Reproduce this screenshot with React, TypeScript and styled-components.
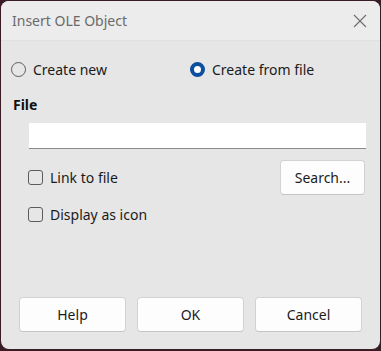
import React, { useState } from "react";
import styled, { createGlobalStyle } from "styled-components";

const GlobalStyle = createGlobalStyle`
  html, body {
    margin: 0;
    padding: 0;
    background: #3a1c24;
  }
  body {
    width: 381px;
    height: 351px;
    overflow: hidden;
    font-family: "Noto Sans", "Open Sans", sans-serif;
  }
`;

const Window = styled.div`
  margin: 1px 0 0 1px;
  width: 379px;
  height: 348px;
  background: #e6e6e6;
  border-radius: 8px;
  overflow: hidden;
  display: flex;
  flex-direction: column;
`;

const TitleBar = styled.div`
  height: 39px;
  flex: none;
  background: #ececec;
  border-bottom: 1px solid #e0e0e0;
  display: flex;
  align-items: center;
  justify-content: space-between;
  padding: 0 11px 0 11px;
`;

const Title = styled.span`
  font-size: 14px;
  color: #6a6a6a;
  margin-top: -1px;
`;

const CloseButton = styled.button`
  border: none;
  background: transparent;
  padding: 0;
  width: 18px;
  height: 18px;
  display: flex;
  align-items: center;
  justify-content: center;
`;

const Body = styled.div`
  flex: 1;
  display: flex;
  flex-direction: column;
  padding: 19px 14px 17px 10px;
`;

const RadioRow = styled.div`
  display: grid;
  grid-template-columns: 179px 1fr;
  height: 18px;
  align-items: center;
`;

const Option = styled.label`
  display: flex;
  align-items: center;
  gap: 7px;
  font-size: 14px;
  color: #1b1b1b;
  cursor: default;
`;

const RadioDot = styled.span<{ $on: boolean }>`
  width: 15px;
  height: 15px;
  box-sizing: border-box;
  border-radius: 50%;
  border: ${(p) => (p.$on ? "4.5px solid #0b4f9e" : "1px solid #5c5c5c")};
  background: ${(p) => (p.$on ? "#ffffff" : "transparent")};
  flex: none;
`;

const SectionLabel = styled.div`
  margin-top: 17px;
  margin-left: 2px;
  font-size: 14px;
  font-weight: 700;
  color: #111;
`;

const FileInput = styled.input`
  margin: 9px 0 0 18px;
  height: 26px;
  box-sizing: border-box;
  border: none;
  border-bottom: 1px solid #8a8a8a;
  background: #ffffff;
  outline: none;
  font-family: inherit;
  font-size: 14px;
  padding: 0 6px;
`;

const OptionsGrid = styled.div`
  margin: 11px 0 0 17px;
  display: grid;
  grid-template-columns: 1fr auto;
  grid-template-rows: 34px 34px;
  row-gap: 3px;
  align-items: center;
`;

const CheckBox = styled.span<{ $on: boolean }>`
  width: 15px;
  height: 15px;
  box-sizing: border-box;
  border-radius: 3px;
  border: 1px solid #5c5c5c;
  background: ${(p) => (p.$on ? "#0b4f9e" : "transparent")};
  flex: none;
`;

const Button = styled.button`
  height: 35px;
  box-sizing: border-box;
  border: 1px solid #d2d2d2;
  border-bottom-color: #c4c4c4;
  border-radius: 4px;
  background: #fdfdfd;
  font-family: inherit;
  font-size: 14px;
  color: #1b1b1b;
  padding: 0;
`;

const SearchButton = styled(Button)`
  width: 85px;
  margin-right: 1px;
`;

const Footer = styled.div`
  margin-top: auto;
  display: grid;
  grid-template-columns: repeat(3, 107px);
  column-gap: 11px;
  padding-left: 8px;
`;

export default function App() {
  const [fromFile, setFromFile] = useState(true);
  const [link, setLink] = useState(false);
  const [asIcon, setAsIcon] = useState(false);

  return (
    <>
      <GlobalStyle />
      <Window>
        <TitleBar>
          <Title>Insert OLE Object</Title>
          <CloseButton aria-label="Close">
            <svg width="16" height="16" viewBox="0 0 16 16">
              <path d="M2 2 L14 14 M14 2 L2 14" stroke="#707070" strokeWidth="1.2" />
            </svg>
          </CloseButton>
        </TitleBar>
        <Body>
          <RadioRow>
            <Option onClick={() => setFromFile(false)}>
              <RadioDot $on={!fromFile} />
              Create new
            </Option>
            <Option onClick={() => setFromFile(true)}>
              <RadioDot $on={fromFile} />
              Create from file
            </Option>
          </RadioRow>
          <SectionLabel>File</SectionLabel>
          <FileInput />
          <OptionsGrid>
            <Option onClick={() => setLink(!link)}>
              <CheckBox $on={link} />
              Link to file
            </Option>
            <SearchButton>Search...</SearchButton>
            <Option onClick={() => setAsIcon(!asIcon)}>
              <CheckBox $on={asIcon} />
              Display as icon
            </Option>
          </OptionsGrid>
          <Footer>
            <Button>Help</Button>
            <Button>OK</Button>
            <Button>Cancel</Button>
          </Footer>
        </Body>
      </Window>
    </>
  );
}
